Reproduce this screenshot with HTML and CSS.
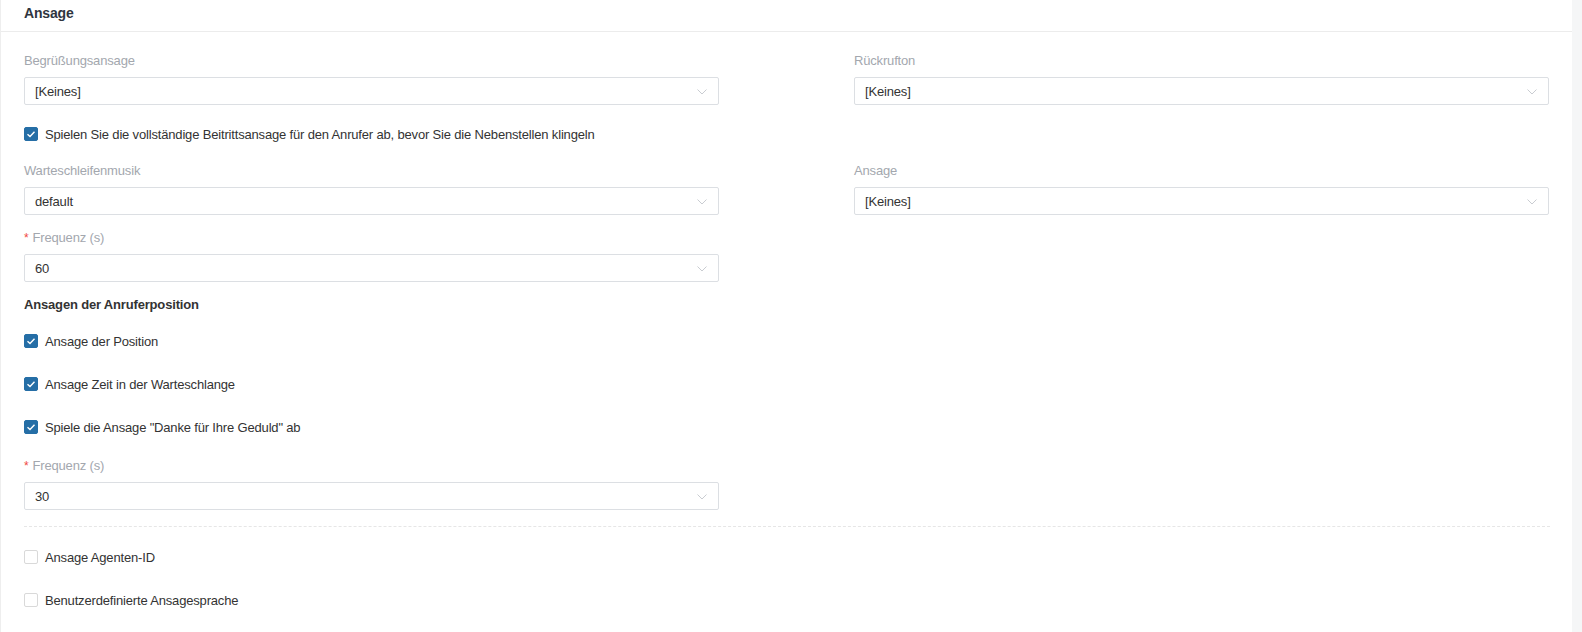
FILE: index.html
```html
<!DOCTYPE html>
<html lang="de">
<head>
<meta charset="utf-8">
<title>Ansage</title>
<link rel="stylesheet" href="styles.css">
</head>
<body>
<div class="card">
  <div class="card-header">Ansage</div>
  <div class="card-body">
    <div class="grid row-1">
      <div class="item">
        <div class="label">Begrüßungsansage</div>
        <div class="select"><span>[Keines]</span><svg class="chev" viewBox="0 0 10 6" width="10" height="6"><path d="M0.5 0.5 L5 5 L9.5 0.5" fill="none" stroke="#c9ccd1" stroke-width="1"/></svg></div>
      </div>
      <div class="item">
        <div class="label">Rückrufton</div>
        <div class="select"><span>[Keines]</span><svg class="chev" viewBox="0 0 10 6" width="10" height="6"><path d="M0.5 0.5 L5 5 L9.5 0.5" fill="none" stroke="#c9ccd1" stroke-width="1"/></svg></div>
      </div>
    </div>

    <label class="check row-check1"><span class="box checked"><svg viewBox="0 0 14 14" width="14" height="14"><path d="M3.5 7.2 L6 9.5 L10.5 4.8" fill="none" stroke="#fff" stroke-width="1.4"/></svg></span><span>Spielen Sie die vollständige Beitrittsansage für den Anrufer ab, bevor Sie die Nebenstellen klingeln</span></label>

    <div class="grid row-2">
      <div class="item">
        <div class="label">Warteschleifenmusik</div>
        <div class="select"><span>default</span><svg class="chev" viewBox="0 0 10 6" width="10" height="6"><path d="M0.5 0.5 L5 5 L9.5 0.5" fill="none" stroke="#c9ccd1" stroke-width="1"/></svg></div>
      </div>
      <div class="item">
        <div class="label">Ansage</div>
        <div class="select"><span>[Keines]</span><svg class="chev" viewBox="0 0 10 6" width="10" height="6"><path d="M0.5 0.5 L5 5 L9.5 0.5" fill="none" stroke="#c9ccd1" stroke-width="1"/></svg></div>
      </div>
    </div>

    <div class="grid row-3">
      <div class="item">
        <div class="label"><span class="req">*</span>Frequenz (s)</div>
        <div class="select"><span>60</span><svg class="chev" viewBox="0 0 10 6" width="10" height="6"><path d="M0.5 0.5 L5 5 L9.5 0.5" fill="none" stroke="#c9ccd1" stroke-width="1"/></svg></div>
      </div>
    </div>

    <div class="subheading">Ansagen der Anruferposition</div>

    <label class="check row-pos1"><span class="box checked"><svg viewBox="0 0 14 14" width="14" height="14"><path d="M3.5 7.2 L6 9.5 L10.5 4.8" fill="none" stroke="#fff" stroke-width="1.4"/></svg></span><span>Ansage der Position</span></label>
    <label class="check row-pos"><span class="box checked"><svg viewBox="0 0 14 14" width="14" height="14"><path d="M3.5 7.2 L6 9.5 L10.5 4.8" fill="none" stroke="#fff" stroke-width="1.4"/></svg></span><span>Ansage Zeit in der Warteschlange</span></label>
    <label class="check row-pos"><span class="box checked"><svg viewBox="0 0 14 14" width="14" height="14"><path d="M3.5 7.2 L6 9.5 L10.5 4.8" fill="none" stroke="#fff" stroke-width="1.4"/></svg></span><span>Spiele die Ansage "Danke für Ihre Geduld" ab</span></label>

    <div class="grid row-4">
      <div class="item">
        <div class="label"><span class="req">*</span>Frequenz (s)</div>
        <div class="select"><span>30</span><svg class="chev" viewBox="0 0 10 6" width="10" height="6"><path d="M0.5 0.5 L5 5 L9.5 0.5" fill="none" stroke="#c9ccd1" stroke-width="1"/></svg></div>
      </div>
    </div>

    <div class="divider"></div>

    <label class="check row-agent"><span class="box"></span><span>Ansage Agenten-ID</span></label>
    <label class="check row-pos"><span class="box"></span><span>Benutzerdefinierte Ansagesprache</span></label>
  </div>
</div>
</body>
</html>
```

FILE: styles.css
```css
* { box-sizing: border-box; }

html, body {
  margin: 0;
  padding: 0;
  height: 100%;
}

body {
  background: #f5f6f7;
  font-family: "Liberation Sans", Arial, sans-serif;
  font-size: 13px;
  letter-spacing: -0.17px;
  color: #333333;
  overflow: hidden;
}

.card {
  width: 1572px;
  height: 632px;
  background: #ffffff;
  border-left: 1px solid #eeeeee;
}

.card-header {
  height: 32px;
  line-height: 27px;
  padding-left: 23px;
  font-size: 14px;
  font-weight: bold;
  color: #2f3540;
  border-bottom: 1px solid #ececec;
}

.card-body {
  padding: 18px 22px 0 23px;
}

.grid {
  display: grid;
  grid-template-columns: 695px 695px;
  column-gap: 135px;
}

.item .label {
  height: 22px;
  line-height: 22px;
  color: #a3a7ae;
  margin-bottom: 5px;
}

.req {
  color: #f0483e;
  margin-right: 4px;
  font-size: 12px;
}

.select {
  height: 28px;
  border: 1px solid #dcdfe3;
  border-radius: 2px;
  display: flex;
  align-items: center;
  justify-content: space-between;
  padding: 0 11px 0 10px;
  color: #333333;
}

.chev { display: block; margin-top: 1px; }

.check {
  display: flex;
  align-items: center;
  height: 20px;
  gap: 7px;
  color: #333333;
}

.box {
  width: 14px;
  height: 14px;
  border: 1px solid #d9d9d9;
  border-radius: 2px;
  background: #fff;
  flex: none;
  display: flex;
}

.box.checked {
  background: #256ea6;
  border-color: #256ea6;
}

.box.checked svg { margin: -1px; }

.row-check1 { margin-top: 19px; }
.row-2 { margin-top: 16px; }
.row-3 { margin-top: 12px; }

.subheading {
  margin-top: 13px;
  height: 20px;
  line-height: 20px;
  font-weight: bold;
  color: #333;
}

.row-pos1 { margin-top: 16px; }
.row-pos { margin-top: 23px; }
.row-4 { margin-top: 18px; }

.divider {
  margin-top: 16px;
  border-top: 1px dashed #e6e6e6;
}

.row-agent { margin-top: 20px; }
```
